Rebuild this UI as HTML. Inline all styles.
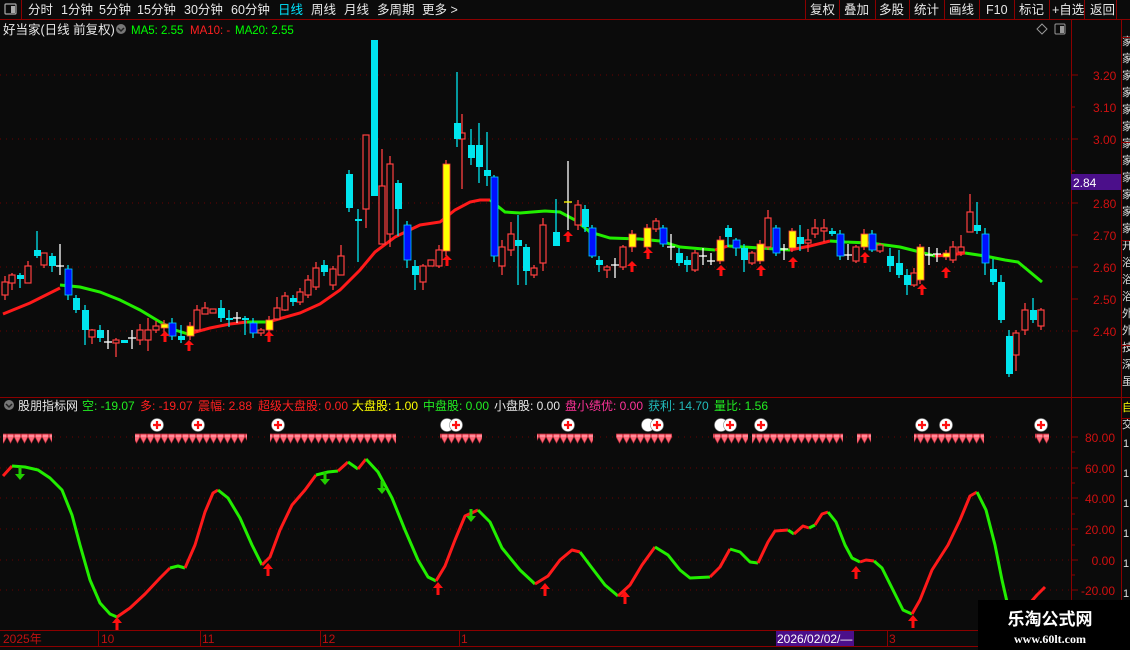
<!DOCTYPE html>
<html><head><meta charset="utf-8"><style>
html,body{margin:0;padding:0;background:#0b0b0b;width:1130px;height:650px;overflow:hidden;font-family:"Liberation Sans","Noto Sans CJK SC",sans-serif;}
</style></head><body>
<svg width="1130" height="650" xmlns="http://www.w3.org/2000/svg" style="position:absolute;left:0;top:0;font-family:'Liberation Sans','Noto Sans CJK SC',sans-serif">
<defs>
<pattern id="gem" x="0" y="433" width="7" height="12" patternUnits="userSpaceOnUse">
<path d="M0.5 1 L6.5 1 L7 3.5 L3.5 10 L0 3.5Z" fill="#ff6a7a" stroke="#c8303e" stroke-width="0.7"/>
<path d="M1 3 L6 3" stroke="#ffc0c8" stroke-width="0.8"/>
</pattern>
<clipPath id="sb"><rect x="1122" y="20" width="8" height="626"/></clipPath>
</defs>
<rect width="1130" height="650" fill="#0b0b0b"/>
<!-- top bar -->
<line x1="0" y1="19.5" x2="1130" y2="19.5" stroke="#8b0000"/>
<line x1="21.5" y1="0" x2="21.5" y2="19" stroke="#8b0000"/>
<rect x="5" y="4" width="11" height="10" fill="none" stroke="#aaa" stroke-width="1.2" rx="1"/><rect x="11" y="6" width="4" height="7" fill="#aaa"/>
<g font-size="12.5" fill="#e8e8e8">
<text x="28" y="14">分时</text><text x="61" y="14">1分钟</text><text x="99" y="14">5分钟</text><text x="137" y="14">15分钟</text><text x="184" y="14">30分钟</text><text x="231" y="14">60分钟</text>
<text x="278" y="14" fill="#00e5ff">日线</text><text x="311" y="14">周线</text><text x="344" y="14">月线</text><text x="377" y="14">多周期</text><text x="422" y="14">更多 ></text>
</g>
<g stroke="#8b0000"><line x1="805.5" y1="0" x2="805.5" y2="19"/><line x1="839.5" y1="0" x2="839.5" y2="19"/><line x1="875.5" y1="0" x2="875.5" y2="19"/><line x1="909.5" y1="0" x2="909.5" y2="19"/><line x1="944.5" y1="0" x2="944.5" y2="19"/><line x1="979.5" y1="0" x2="979.5" y2="19"/><line x1="1014.5" y1="0" x2="1014.5" y2="19"/><line x1="1049.5" y1="0" x2="1049.5" y2="19"/><line x1="1084.5" y1="0" x2="1084.5" y2="19"/><line x1="1116.5" y1="0" x2="1116.5" y2="19"/><line x1="1071.5" y1="19" x2="1071.5" y2="646"/><line x1="1121.5" y1="19" x2="1121.5" y2="646"/></g>
<g font-size="12.5" fill="#e8e8e8">
<text x="810" y="14">复权</text><text x="844" y="14">叠加</text><text x="879" y="14">多股</text><text x="914" y="14">统计</text><text x="949" y="14">画线</text><text x="986" y="14">F10</text><text x="1019" y="14">标记</text><text x="1052" y="14">+自选</text><text x="1090" y="14">返回</text>
</g>
<!-- header legend -->
<text x="3" y="34" font-size="12.5" fill="#e8e8e8">好当家(日线 前复权)</text>
<circle cx="121" cy="29" r="5" fill="#777"/><path d="M118 28 L121 31 L124 28" stroke="#222" stroke-width="1.5" fill="none"/>
<text x="131" y="34" font-size="11.5" fill="#00ff00">MA5: 2.55</text>
<text x="190" y="34" font-size="11.5" fill="#ff2020">MA10: -</text>
<text x="235" y="34" font-size="11.5" fill="#00ff00">MA20: 2.55</text>
<path d="M1042 24 L1047 29 L1042 34 L1037 29Z" fill="none" stroke="#999"/>
<rect x="1055" y="24" width="10" height="10" fill="none" stroke="#999" rx="1"/><rect x="1060" y="26" width="4" height="7" fill="#999"/>
<!-- sidebar -->
<g font-size="11" fill="#ddd" clip-path="url(#sb)">
<text x="1122" y="45">家</text><text x="1122" y="62">家</text><text x="1122" y="79">家</text><text x="1122" y="96">家</text><text x="1122" y="113">家</text><text x="1122" y="130">家</text><text x="1122" y="147">家</text><text x="1122" y="164">家</text><text x="1122" y="181">家</text><text x="1122" y="198">家</text><text x="1122" y="215">家</text><text x="1122" y="232">家</text><text x="1122" y="249">开</text><text x="1122" y="266">浴</text><text x="1122" y="283">浴</text><text x="1122" y="300">浴</text><text x="1122" y="317">外</text><text x="1122" y="334">外</text><text x="1122" y="351">技</text><text x="1122" y="368">深</text><text x="1122" y="385">虽</text>
<text x="1122" y="411" fill="#ffff00">自</text><text x="1122" y="428">交</text>
<text x="1123" y="447">1</text><text x="1123" y="477">1</text><text x="1123" y="507">1</text><text x="1123" y="537">1</text><text x="1123" y="567">1</text><text x="1123" y="597">1</text>
</g>
<g stroke="#8b0000"><line x1="1121" y1="37.5" x2="1130" y2="37.5"/><line x1="1121" y1="142.5" x2="1130" y2="142.5"/><line x1="1121" y1="240.5" x2="1130" y2="240.5"/><line x1="1121" y1="345.5" x2="1130" y2="345.5"/><line x1="1121" y1="418.5" x2="1130" y2="418.5"/></g>
<!-- price axis -->
<g stroke="#8b0000"><line x1="1071" y1="75" x2="1078" y2="75"/><line x1="1071" y1="107" x2="1075" y2="107"/><line x1="1071" y1="139" x2="1078" y2="139"/><line x1="1071" y1="171" x2="1075" y2="171"/><line x1="1071" y1="203" x2="1078" y2="203"/><line x1="1071" y1="235" x2="1078" y2="235"/><line x1="1071" y1="267" x2="1078" y2="267"/><line x1="1071" y1="299" x2="1078" y2="299"/><line x1="1071" y1="331" x2="1078" y2="331"/></g>
<g font-size="12" fill="#d01010"><text x="1093" y="80">3.20</text><text x="1093" y="112">3.10</text><text x="1093" y="144">3.00</text><text x="1093" y="208">2.80</text><text x="1093" y="240">2.70</text><text x="1093" y="272">2.60</text><text x="1093" y="304">2.50</text><text x="1093" y="336">2.40</text></g>
<rect x="1071" y="174" width="50" height="16" fill="#4b0f8a"/><text x="1073" y="187" font-size="12" fill="#fff">2.84</text>
<!-- grid -->
<g stroke="#6a0000" stroke-dasharray="1,5"><line x1="0" y1="75" x2="1070" y2="75"/><line x1="0" y1="139" x2="1070" y2="139"/><line x1="0" y1="203" x2="1070" y2="203"/><line x1="0" y1="267" x2="1070" y2="267"/><line x1="0" y1="331" x2="1070" y2="331"/>
<line x1="0" y1="437" x2="1070" y2="437"/><line x1="0" y1="468" x2="1070" y2="468"/><line x1="0" y1="498" x2="1070" y2="498"/><line x1="0" y1="529" x2="1070" y2="529"/><line x1="0" y1="560" x2="1070" y2="560"/><line x1="0" y1="590" x2="1070" y2="590"/></g>
<!-- MA lines -->
<g fill="none" stroke-width="3">
<polyline stroke="#ff1a1a" points="3,314 30,303 60,288"/>
<polyline stroke="#22ee00" points="60,285 80,287 100,292 120,300 140,310 160,322 175,330 188,334"/>
<polyline stroke="#ff1a1a" points="188,334 210,328 230,324 247,322"/>
<polyline stroke="#22ee00" points="247,322 268,322"/>
<polyline stroke="#ff1a1a" points="268,322 300,313 320,304 340,290 360,270 375,252 395,237 420,225 440,222 455,210 470,202 480,200 490,200"/>
<polyline stroke="#22ee00" points="490,200 505,212 520,213 545,211 560,212 575,220 590,232 610,238 640,239 660,241 680,247 715,250"/>
<polyline stroke="#ff1a1a" points="715,250 728,246"/>
<polyline stroke="#22ee00" points="728,246 760,248 790,250"/>
<polyline stroke="#ff1a1a" points="790,250 810,246 830,241"/>
<polyline stroke="#22ee00" points="830,241 845,242 870,243 900,247 920,252 935,256"/>
<polyline stroke="#ff1a1a" points="935,256 950,255 965,253"/>
<polyline stroke="#22ee00" points="965,253 985,256 1005,260 1018,262 1030,272 1042,282"/>
</g>
<!-- candles: wicks -->
<g stroke-width="1.3">
<g stroke="#ff4040">
<line x1="5" y1="276" x2="5" y2="300"/><line x1="12" y1="273" x2="12" y2="290"/><line x1="28" y1="261" x2="28" y2="283"/><line x1="44" y1="262" x2="44" y2="268"/><line x1="92" y1="329" x2="92" y2="344"/><line x1="116" y1="338" x2="116" y2="357"/><line x1="140" y1="324" x2="140" y2="345"/><line x1="148" y1="318" x2="148" y2="351"/><line x1="156" y1="321" x2="156" y2="333"/><line x1="197" y1="305" x2="197" y2="332"/><line x1="205" y1="302" x2="205" y2="314"/><line x1="261" y1="328" x2="261" y2="336"/><line x1="277" y1="297" x2="277" y2="320"/><line x1="285" y1="292" x2="285" y2="311"/><line x1="300" y1="288" x2="300" y2="305"/><line x1="308" y1="275" x2="308" y2="298"/><line x1="316" y1="262" x2="316" y2="290"/><line x1="333" y1="266" x2="333" y2="290"/><line x1="341" y1="245" x2="341" y2="275"/><line x1="366" y1="135" x2="366" y2="228"/><line x1="382" y1="149" x2="382" y2="244"/><line x1="390" y1="156" x2="390" y2="247"/><line x1="423" y1="264" x2="423" y2="290"/><line x1="439" y1="245" x2="439" y2="268"/><line x1="462" y1="114" x2="462" y2="189"/><line x1="502" y1="240" x2="502" y2="275"/><line x1="511" y1="222" x2="511" y2="256"/><line x1="534" y1="265" x2="534" y2="278"/><line x1="543" y1="218" x2="543" y2="271"/><line x1="578" y1="200" x2="578" y2="230"/><line x1="607" y1="265" x2="607" y2="278"/><line x1="623" y1="245" x2="623" y2="270"/><line x1="656" y1="218" x2="656" y2="232"/><line x1="695" y1="250" x2="695" y2="272"/><line x1="752" y1="251" x2="752" y2="265"/><line x1="768" y1="210" x2="768" y2="250"/><line x1="808" y1="229" x2="808" y2="252"/><line x1="815" y1="219" x2="815" y2="238"/><line x1="824" y1="219" x2="824" y2="242"/><line x1="856" y1="245" x2="856" y2="263"/><line x1="880" y1="243" x2="880" y2="253"/><line x1="914" y1="268" x2="914" y2="287"/><line x1="953" y1="241" x2="953" y2="263"/><line x1="961" y1="235" x2="961" y2="256"/><line x1="970" y1="194" x2="970" y2="232"/><line x1="1016" y1="330" x2="1016" y2="371"/><line x1="1025" y1="303" x2="1025" y2="335"/><line x1="1041" y1="308" x2="1041" y2="330"/>
</g>
<g stroke="#00e5ee">
<line x1="20" y1="273" x2="20" y2="288"/><line x1="37" y1="231" x2="37" y2="258"/><line x1="52" y1="253" x2="52" y2="272"/><line x1="76" y1="295" x2="76" y2="313"/><line x1="85" y1="305" x2="85" y2="345"/><line x1="100" y1="325" x2="100" y2="342"/><line x1="181" y1="325" x2="181" y2="343"/><line x1="221" y1="300" x2="221" y2="322"/><line x1="229" y1="310" x2="229" y2="327"/><line x1="245" y1="316" x2="245" y2="335"/><line x1="293" y1="295" x2="293" y2="306"/><line x1="324" y1="260" x2="324" y2="276"/><line x1="349" y1="170" x2="349" y2="212"/><line x1="358" y1="209" x2="358" y2="262"/><line x1="398" y1="180" x2="398" y2="236"/><line x1="415" y1="260" x2="415" y2="290"/><line x1="457" y1="72" x2="457" y2="147"/><line x1="471" y1="129" x2="471" y2="165"/><line x1="479" y1="123" x2="479" y2="183"/><line x1="487" y1="132" x2="487" y2="186"/><line x1="518" y1="215" x2="518" y2="285"/><line x1="526" y1="244" x2="526" y2="285"/><line x1="556" y1="199" x2="556" y2="246"/><line x1="585" y1="205" x2="585" y2="232"/><line x1="599" y1="256" x2="599" y2="272"/><line x1="679" y1="248" x2="679" y2="266"/><line x1="687" y1="256" x2="687" y2="272"/><line x1="728" y1="225" x2="728" y2="247"/><line x1="744" y1="244" x2="744" y2="272"/><line x1="800" y1="225" x2="800" y2="251"/><line x1="832" y1="228" x2="832" y2="236"/><line x1="890" y1="248" x2="890" y2="272"/><line x1="899" y1="250" x2="899" y2="278"/><line x1="907" y1="269" x2="907" y2="295"/><line x1="977" y1="202" x2="977" y2="234"/><line x1="993" y1="259" x2="993" y2="285"/><line x1="1001" y1="275" x2="1001" y2="323"/><line x1="1009" y1="330" x2="1009" y2="377"/><line x1="1033" y1="298" x2="1033" y2="323"/>
</g>
<g stroke="#00e5ee"><line x1="68" y1="265" x2="68" y2="300"/><line x1="172" y1="318" x2="172" y2="340"/><line x1="253" y1="318" x2="253" y2="338"/><line x1="407" y1="221" x2="407" y2="268"/><line x1="494" y1="175" x2="494" y2="262"/><line x1="592" y1="225" x2="592" y2="258"/><line x1="663" y1="225" x2="663" y2="247"/><line x1="736" y1="238" x2="736" y2="256"/><line x1="776" y1="225" x2="776" y2="256"/><line x1="840" y1="230" x2="840" y2="260"/><line x1="872" y1="230" x2="872" y2="252"/><line x1="985" y1="228" x2="985" y2="275"/></g>
<g stroke="#ff4040"><line x1="446" y1="160" x2="446" y2="256"/><line x1="164" y1="320" x2="164" y2="333"/><line x1="190" y1="322" x2="190" y2="340"/><line x1="269" y1="316" x2="269" y2="334"/><line x1="632" y1="230" x2="632" y2="252"/><line x1="647" y1="224" x2="647" y2="250"/><line x1="720" y1="236" x2="720" y2="264"/><line x1="760" y1="240" x2="760" y2="264"/><line x1="792" y1="228" x2="792" y2="252"/><line x1="864" y1="229" x2="864" y2="250"/><line x1="920" y1="244" x2="920" y2="284"/><line x1="946" y1="250" x2="946" y2="260"/></g>
<g stroke="#fff"><line x1="60" y1="244" x2="60" y2="275"/><line x1="56" y1="266" x2="64" y2="266"/><line x1="108" y1="330" x2="108" y2="349"/><line x1="104" y1="342" x2="112" y2="342"/><line x1="132" y1="330" x2="132" y2="349"/><line x1="128" y1="338" x2="136" y2="338"/><line x1="237" y1="312" x2="237" y2="323"/><line x1="233" y1="318" x2="241" y2="318"/><line x1="568" y1="161" x2="568" y2="230"/><line x1="564" y1="202" x2="572" y2="202" stroke="#ffff00"/><line x1="615" y1="258" x2="615" y2="278"/><line x1="611" y1="265" x2="619" y2="265"/><line x1="671" y1="234" x2="671" y2="260"/><line x1="667" y1="247" x2="675" y2="247"/><line x1="703" y1="248" x2="703" y2="265"/><line x1="699" y1="256" x2="707" y2="256"/><line x1="711" y1="253" x2="711" y2="265"/><line x1="707" y1="261" x2="715" y2="261"/><line x1="784" y1="244" x2="784" y2="260"/><line x1="780" y1="249" x2="788" y2="249"/><line x1="848" y1="244" x2="848" y2="260"/><line x1="844" y1="255" x2="852" y2="255"/><line x1="929" y1="247" x2="929" y2="265"/><line x1="925" y1="255" x2="933" y2="255"/><line x1="937" y1="248" x2="937" y2="262"/><line x1="933" y1="254" x2="941" y2="254"/></g>
</g>
<!-- red hollow bodies -->
<g fill="#0b0b0b" stroke="#ff4040" stroke-width="1.2">
<rect x="2" y="282" width="6" height="13"/><rect x="9" y="275" width="6" height="8"/><rect x="25" y="266" width="6" height="17"/><rect x="41" y="253" width="6" height="12"/><rect x="89" y="330" width="6" height="7"/><rect x="113" y="340" width="6" height="3"/><rect x="137" y="330" width="6" height="10"/><rect x="145" y="330" width="6" height="10"/><rect x="153" y="326" width="6" height="4"/><rect x="194" y="310" width="6" height="20"/><rect x="202" y="308" width="6" height="6"/><rect x="210" y="309" width="6" height="4"/><rect x="258" y="330" width="6" height="3"/><rect x="274" y="308" width="6" height="11"/><rect x="282" y="296" width="6" height="14"/><rect x="297" y="292" width="6" height="10"/><rect x="305" y="280" width="6" height="15"/><rect x="313" y="268" width="6" height="19"/><rect x="330" y="269" width="6" height="16"/><rect x="338" y="256" width="6" height="19"/><rect x="363" y="135" width="6" height="74"/><rect x="379" y="186" width="6" height="58"/><rect x="387" y="164" width="6" height="70"/><rect x="420" y="266" width="6" height="16"/><rect x="428" y="260" width="6" height="6"/><rect x="436" y="250" width="6" height="16"/><rect x="459" y="133" width="6" height="6"/><rect x="499" y="247" width="6" height="19"/><rect x="508" y="234" width="6" height="16"/><rect x="531" y="268" width="6" height="7"/><rect x="540" y="225" width="6" height="38"/><rect x="575" y="205" width="6" height="20"/><rect x="604" y="267" width="6" height="3"/><rect x="620" y="247" width="6" height="20"/><rect x="653" y="221" width="6" height="8"/><rect x="692" y="253" width="6" height="17"/><rect x="749" y="253" width="6" height="10"/><rect x="765" y="218" width="6" height="29"/><rect x="805" y="240" width="6" height="3"/><rect x="812" y="228" width="6" height="6"/><rect x="821" y="228" width="6" height="3"/><rect x="853" y="247" width="6" height="14"/><rect x="877" y="245" width="6" height="6"/><rect x="911" y="273" width="6" height="12"/><rect x="950" y="247" width="6" height="13"/><rect x="958" y="247" width="6" height="5"/><rect x="967" y="212" width="6" height="20"/><rect x="1013" y="333" width="6" height="22"/><rect x="1022" y="310" width="6" height="20"/><rect x="1038" y="310" width="6" height="16"/>
</g>
<!-- cyan bodies -->
<g fill="#00e5ee">
<rect x="17" y="275" width="7" height="4"/><rect x="34" y="250" width="7" height="6"/><rect x="49" y="256" width="7" height="10"/><rect x="73" y="298" width="7" height="12"/><rect x="82" y="310" width="7" height="20"/><rect x="97" y="330" width="7" height="8"/><rect x="121" y="340" width="7" height="3"/><rect x="178" y="336" width="7" height="4"/><rect x="218" y="308" width="7" height="10"/><rect x="226" y="318" width="7" height="2"/><rect x="242" y="318" width="7" height="2"/><rect x="290" y="298" width="7" height="4"/><rect x="321" y="265" width="7" height="7"/><rect x="346" y="174" width="7" height="34"/><rect x="355" y="219" width="7" height="2"/><rect x="371" y="40" width="7" height="156"/><rect x="395" y="183" width="7" height="26"/><rect x="412" y="266" width="7" height="9"/><rect x="454" y="123" width="7" height="16"/><rect x="468" y="145" width="7" height="13"/><rect x="476" y="145" width="7" height="22"/><rect x="484" y="170" width="7" height="6"/><rect x="515" y="240" width="7" height="6"/><rect x="523" y="247" width="7" height="24"/><rect x="553" y="232" width="7" height="14"/><rect x="582" y="209" width="7" height="18"/><rect x="596" y="260" width="7" height="5"/><rect x="676" y="253" width="7" height="10"/><rect x="684" y="260" width="7" height="5"/><rect x="725" y="228" width="7" height="9"/><rect x="741" y="248" width="7" height="12"/><rect x="797" y="237" width="7" height="7"/><rect x="829" y="231" width="7" height="3"/><rect x="887" y="256" width="7" height="10"/><rect x="896" y="263" width="7" height="12"/><rect x="904" y="275" width="7" height="10"/><rect x="974" y="225" width="7" height="6"/><rect x="990" y="269" width="7" height="13"/><rect x="998" y="282" width="7" height="38"/><rect x="1006" y="336" width="7" height="38"/><rect x="1030" y="310" width="7" height="10"/>
</g>
<!-- blue -->
<g fill="#0010ff" stroke="#00d0ff" stroke-width="0.8">
<rect x="65" y="269" width="7" height="26"/><rect x="169" y="323" width="7" height="13"/><rect x="250" y="323" width="7" height="10"/><rect x="404" y="225" width="7" height="35"/><rect x="491" y="177" width="7" height="79"/><rect x="589" y="228" width="7" height="28"/><rect x="660" y="228" width="7" height="16"/><rect x="733" y="240" width="7" height="8"/><rect x="773" y="228" width="7" height="25"/><rect x="837" y="234" width="7" height="22"/><rect x="869" y="234" width="7" height="16"/><rect x="982" y="234" width="7" height="29"/>
</g>
<!-- yellow -->
<g fill="#ffff00" stroke="#ff4040" stroke-width="0.8">
<rect x="161" y="324" width="7" height="4"/><rect x="187" y="326" width="7" height="10"/><rect x="266" y="320" width="7" height="10"/><rect x="443" y="164" width="7" height="87"/><rect x="629" y="234" width="7" height="13"/><rect x="644" y="228" width="7" height="19"/><rect x="717" y="240" width="7" height="21"/><rect x="757" y="244" width="7" height="17"/><rect x="789" y="231" width="7" height="17"/><rect x="861" y="234" width="7" height="13"/><rect x="917" y="247" width="7" height="33"/><rect x="943" y="253" width="7" height="4"/>
</g>
<!-- up arrows main -->
<g fill="#ff1010">
<path d="M165 331 l-5 5 h3.5 v6 h3 v-6 h3.5z"/><path d="M189 340 l-5 5 h3.5 v6 h3 v-6 h3.5z"/><path d="M269 331 l-5 5 h3.5 v6 h3 v-6 h3.5z"/><path d="M447 255 l-5 5 h3.5 v6 h3 v-6 h3.5z"/><path d="M568 231 l-5 5 h3.5 v6 h3 v-6 h3.5z"/><path d="M632 261 l-5 5 h3.5 v6 h3 v-6 h3.5z"/><path d="M648 248 l-5 5 h3.5 v6 h3 v-6 h3.5z"/><path d="M721 265 l-5 5 h3.5 v6 h3 v-6 h3.5z"/><path d="M761 265 l-5 5 h3.5 v6 h3 v-6 h3.5z"/><path d="M793 257 l-5 5 h3.5 v6 h3 v-6 h3.5z"/><path d="M865 252 l-5 5 h3.5 v6 h3 v-6 h3.5z"/><path d="M922 284 l-5 5 h3.5 v6 h3 v-6 h3.5z"/><path d="M946 267 l-5 5 h3.5 v6 h3 v-6 h3.5z"/>
</g>
<!-- lower panel -->
<line x1="0" y1="397.5" x2="1130" y2="397.5" stroke="#8b0000"/>
<circle cx="9" cy="405" r="5" fill="#777"/><path d="M6 404 L9 407 L12 404" stroke="#222" stroke-width="1.5" fill="none"/>
<g font-size="12">
<text x="18" y="410" fill="#e8e8e8">股朋指标网</text>
<text x="82" y="410" fill="#22ee22">空: -19.07</text>
<text x="140" y="410" fill="#ff2020">多: -19.07</text>
<text x="198" y="410" fill="#ff2020">震幅: 2.88</text>
<text x="258" y="410" fill="#ff2020">超级大盘股: 0.00</text>
<text x="352" y="410" fill="#ffff00">大盘股: 1.00</text>
<text x="423" y="410" fill="#22ee22">中盘股: 0.00</text>
<text x="494" y="410" fill="#e8e8e8">小盘股: 0.00</text>
<text x="565" y="410" fill="#ff3399">盘小绩优: 0.00</text>
<text x="648" y="410" fill="#22bbbb">获利: 14.70</text>
<text x="714" y="410" fill="#22ee22">量比: 1.56</text>
</g>
<g stroke="#8b0000"><line x1="1071" y1="437" x2="1078" y2="437"/><line x1="1071" y1="452" x2="1075" y2="452"/><line x1="1071" y1="468" x2="1078" y2="468"/><line x1="1071" y1="483" x2="1075" y2="483"/><line x1="1071" y1="498" x2="1078" y2="498"/><line x1="1071" y1="514" x2="1075" y2="514"/><line x1="1071" y1="529" x2="1078" y2="529"/><line x1="1071" y1="545" x2="1075" y2="545"/><line x1="1071" y1="560" x2="1078" y2="560"/><line x1="1071" y1="575" x2="1075" y2="575"/><line x1="1071" y1="590" x2="1078" y2="590"/></g>
<g font-size="12" fill="#d01010" text-anchor="end"><text x="1115" y="442">80.00</text><text x="1115" y="473">60.00</text><text x="1115" y="503">40.00</text><text x="1115" y="534">20.00</text><text x="1115" y="565">0.00</text><text x="1115" y="595">-20.00</text></g>
<!-- gems -->
<g fill="url(#gem)">
<rect x="3" y="433" width="49" height="12"/><rect x="135" y="433" width="112" height="12"/><rect x="270" y="433" width="126" height="12"/><rect x="440" y="433" width="42" height="12"/><rect x="537" y="433" width="56" height="12"/><rect x="616" y="433" width="56" height="12"/><rect x="713" y="433" width="35" height="12"/><rect x="752" y="433" width="35" height="12"/><rect x="787" y="433" width="56" height="12"/><rect x="857" y="433" width="14" height="12"/><rect x="914" y="433" width="70" height="12"/><rect x="1035" y="433" width="14" height="12"/>
</g>
<g>
<g fill="#fff" stroke="#888" stroke-width="0.6"><circle cx="157" cy="425" r="6.5"/><circle cx="198" cy="425" r="6.5"/><circle cx="278" cy="425" r="6.5"/><circle cx="447" cy="425" r="6.5"/><circle cx="456" cy="425" r="6.5"/><circle cx="568" cy="425" r="6.5"/><circle cx="648" cy="425" r="6.5"/><circle cx="657" cy="425" r="6.5"/><circle cx="721" cy="425" r="6.5"/><circle cx="730" cy="425" r="6.5"/><circle cx="761" cy="425" r="6.5"/><circle cx="922" cy="425" r="6.5"/><circle cx="946" cy="425" r="6.5"/><circle cx="1041" cy="425" r="6.5"/></g>
<g stroke="#ff1010" stroke-width="2.2"><path d="M153 425h8M157 421v8M194 425h8M198 421v8M274 425h8M278 421v8M452 425h8M456 421v8M564 425h8M568 421v8M653 425h8M657 421v8M726 425h8M730 421v8M757 425h8M761 421v8M918 425h8M922 421v8M942 425h8M946 421v8M1037 425h8M1041 421v8"/></g>
</g>
<!-- oscillator -->
<g fill="none" stroke-width="3" stroke-linejoin="round">
<polyline stroke="#ff1a1a" points="3,476 12,466"/>
<polyline stroke="#22ee00" points="12,466 25,467 38,470 50,478 62,490 72,515 80,545 90,580 100,603 110,614 117,617"/>
<polyline stroke="#ff1a1a" points="117,617 130,608 145,594 160,578 170,568"/>
<polyline stroke="#22ee00" points="170,568 178,566 185,568"/>
<polyline stroke="#ff1a1a" points="185,568 195,545 205,512 213,493 218,490"/>
<polyline stroke="#22ee00" points="218,490 228,498 240,518 252,545 262,565"/>
<polyline stroke="#ff1a1a" points="262,565 270,557 280,530 292,505 305,490 316,475"/>
<polyline stroke="#22ee00" points="316,475 328,472 338,471"/>
<polyline stroke="#ff1a1a" points="338,471 348,462"/>
<polyline stroke="#22ee00" points="348,462 358,469"/>
<polyline stroke="#ff1a1a" points="358,469 366,459"/>
<polyline stroke="#22ee00" points="366,459 378,472 392,498 405,530 418,560 428,577 436,581"/>
<polyline stroke="#ff1a1a" points="436,581 445,566 455,540 465,516 478,510"/>
<polyline stroke="#22ee00" points="478,510 490,522 502,548 520,570 535,584"/>
<polyline stroke="#ff1a1a" points="535,584 548,576 560,560 572,550 580,552"/>
<polyline stroke="#22ee00" points="580,552 592,568 605,585 618,596"/>
<polyline stroke="#ff1a1a" points="618,596 630,585 642,565 655,547"/>
<polyline stroke="#22ee00" points="655,547 668,555 680,570 690,578 710,577"/>
<polyline stroke="#ff1a1a" points="710,577 720,567 730,549"/>
<polyline stroke="#22ee00" points="730,549 740,552 750,562 758,563"/>
<polyline stroke="#ff1a1a" points="758,563 768,542 775,531 788,530"/>
<polyline stroke="#22ee00" points="788,530 794,534"/>
<polyline stroke="#ff1a1a" points="794,534 803,526 809,528"/>
<polyline stroke="#22ee00" points="809,528 815,525"/>
<polyline stroke="#ff1a1a" points="815,525 822,514 828,512"/>
<polyline stroke="#22ee00" points="828,512 836,522 845,545 852,558 860,562"/>
<polyline stroke="#ff1a1a" points="860,562 866,560 874,561"/>
<polyline stroke="#22ee00" points="874,561 882,568 893,590 903,610 912,614"/>
<polyline stroke="#ff1a1a" points="912,614 920,600 932,570 948,545 960,520 970,496 977,492"/>
<polyline stroke="#22ee00" points="977,492 986,510 995,545 1002,580 1010,615"/>
<polyline stroke="#ff1a1a" points="1030,603 1037,595 1045,587"/>
</g>
<g fill="#ff1010">
<path d="M117 617 l-5 6 h3.5 v7 h3 v-7 h3.5z"/><path d="M268 563 l-5 6 h3.5 v7 h3 v-7 h3.5z"/><path d="M438 582 l-5 6 h3.5 v7 h3 v-7 h3.5z"/><path d="M545 583 l-5 6 h3.5 v7 h3 v-7 h3.5z"/><path d="M625 591 l-5 6 h3.5 v7 h3 v-7 h3.5z"/><path d="M856 566 l-5 6 h3.5 v7 h3 v-7 h3.5z"/><path d="M913 615 l-5 6 h3.5 v7 h3 v-7 h3.5z"/>
</g>
<g fill="#22cc00">
<path d="M20 480 l-5 -6 h3.5 v-7 h3 v7 h3.5z"/><path d="M325 485 l-5 -6 h3.5 v-7 h3 v7 h3.5z"/><path d="M382 494 l-5 -6 h3.5 v-7 h3 v7 h3.5z"/><path d="M471 522 l-5 -6 h3.5 v-7 h3 v7 h3.5z"/>
</g>
<!-- time axis -->
<line x1="0" y1="630.5" x2="1130" y2="630.5" stroke="#8b0000"/>
<line x1="0" y1="646.5" x2="1130" y2="646.5" stroke="#8b0000"/>
<g stroke="#8b0000"><line x1="98.5" y1="630" x2="98.5" y2="646"/><line x1="200.5" y1="630" x2="200.5" y2="646"/><line x1="320.5" y1="630" x2="320.5" y2="646"/><line x1="459.5" y1="630" x2="459.5" y2="646"/><line x1="887.5" y1="630" x2="887.5" y2="646"/></g>
<g font-size="12" fill="#c01010"><text x="3" y="643">2025年</text><text x="101" y="643">10</text><text x="202" y="643">11</text><text x="322" y="643">12</text><text x="461" y="643">1</text><text x="889" y="643">3</text></g>
<rect x="776" y="631" width="78" height="15" fill="#4b0f8a"/>
<text x="777" y="643" font-size="12" fill="#fff">2026/02/02/—</text>
<!-- watermark -->
<rect x="978" y="600" width="152" height="50" fill="#000"/>
<text x="1050" y="625" font-size="17" font-weight="bold" fill="#fff" text-anchor="middle" font-family="'Noto Sans CJK SC',sans-serif">乐淘公式网</text>
<text x="1050" y="643" font-size="12" font-weight="bold" fill="#fff" text-anchor="middle" font-family="'Liberation Serif',serif">www.60lt.com</text>
</svg>
</body></html>
